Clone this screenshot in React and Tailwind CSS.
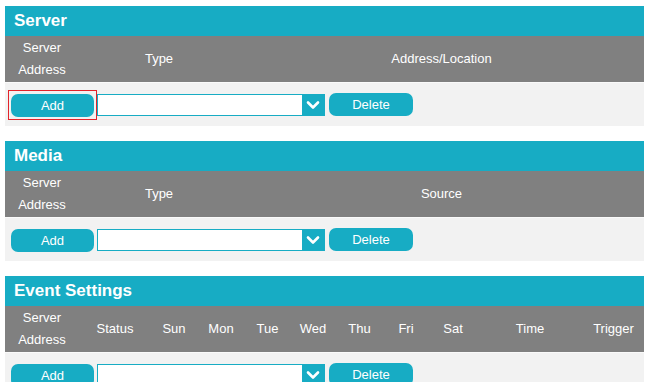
import React from 'react';

const serverCols = [
  { label: ['Server', 'Address'], w: 'w-[74px]' },
  { label: ['Type'], w: 'w-[160px]' },
  { label: ['Address/Location'], w: 'flex-1' },
];

const mediaCols = [
  { label: ['Server', 'Address'], w: 'w-[74px]' },
  { label: ['Type'], w: 'w-[160px]' },
  { label: ['Source'], w: 'flex-1' },
];

const eventCols = [
  { label: ['Server', 'Address'], w: 'w-[74px]' },
  { label: ['Status'], w: 'w-[72px]' },
  { label: ['Sun'], w: 'w-[46px]' },
  { label: ['Mon'], w: 'w-[48px]' },
  { label: ['Tue'], w: 'w-[45px]' },
  { label: ['Wed'], w: 'w-[46px]' },
  { label: ['Thu'], w: 'w-[47px]' },
  { label: ['Fri'], w: 'w-[46px]' },
  { label: ['Sat'], w: 'w-[48px]' },
  { label: ['Time'], w: 'w-[106px]' },
  { label: ['Trigger'], w: 'flex-1' },
];

function Chevron() {
  return (
    <svg width="14" height="10" viewBox="0 0 14 10">
      <polyline points="2,2.5 7,7.5 12,2.5" fill="none" stroke="#fff" strokeWidth="2.6" strokeLinecap="round" strokeLinejoin="round" />
    </svg>
  );
}

function Section({ title, cols, highlight }) {
  return (
    <div className="w-[639px]">
      <div className="h-[30px] bg-[#17acc4] flex items-center pl-[9px] text-[17px] font-bold text-white">
        {title}
      </div>
      <div className="h-[47px] bg-[#808080] flex items-center border-b border-[#fafafa] text-[13px] text-white">
        {cols.map((c, i) => (
          <div key={i} className={`${c.w} flex flex-col items-center justify-center leading-[22px]`}>
            {c.label.map((l) => (
              <span key={l}>{l}</span>
            ))}
          </div>
        ))}
      </div>
      <div className="h-[43px] bg-[#f2f2f2] flex items-center pl-[3px]">
        <div className={`p-[2px] border-[1.5px] ${highlight ? 'border-[#e3232a]' : 'border-transparent'}`}>
          <button className="w-[83px] h-[23px] rounded-[7px] bg-[#17acc4] text-white text-[13px] leading-none">
            Add
          </button>
        </div>
        <div className="ml-[0px] w-[228px] h-[22px] border-[1.5px] border-[#17acc4] bg-white flex justify-end">
          <div className="w-[22px] h-full bg-[#17acc4] flex items-center justify-center">
            <Chevron />
          </div>
        </div>
        <button className="ml-[4px] w-[84px] h-[23px] rounded-[7px] bg-[#17acc4] text-white text-[13px] leading-none">
          Delete
        </button>
      </div>
    </div>
  );
}

export default function App() {
  return (
    <div className="w-[650px] h-[382px] bg-white overflow-hidden pt-[6px] pl-[5px] flex flex-col gap-[15px] font-['Liberation_Sans',Arial,sans-serif]">
      <Section title="Server" cols={serverCols} highlight />
      <Section title="Media" cols={mediaCols} />
      <Section title="Event Settings" cols={eventCols} />
    </div>
  );
}
